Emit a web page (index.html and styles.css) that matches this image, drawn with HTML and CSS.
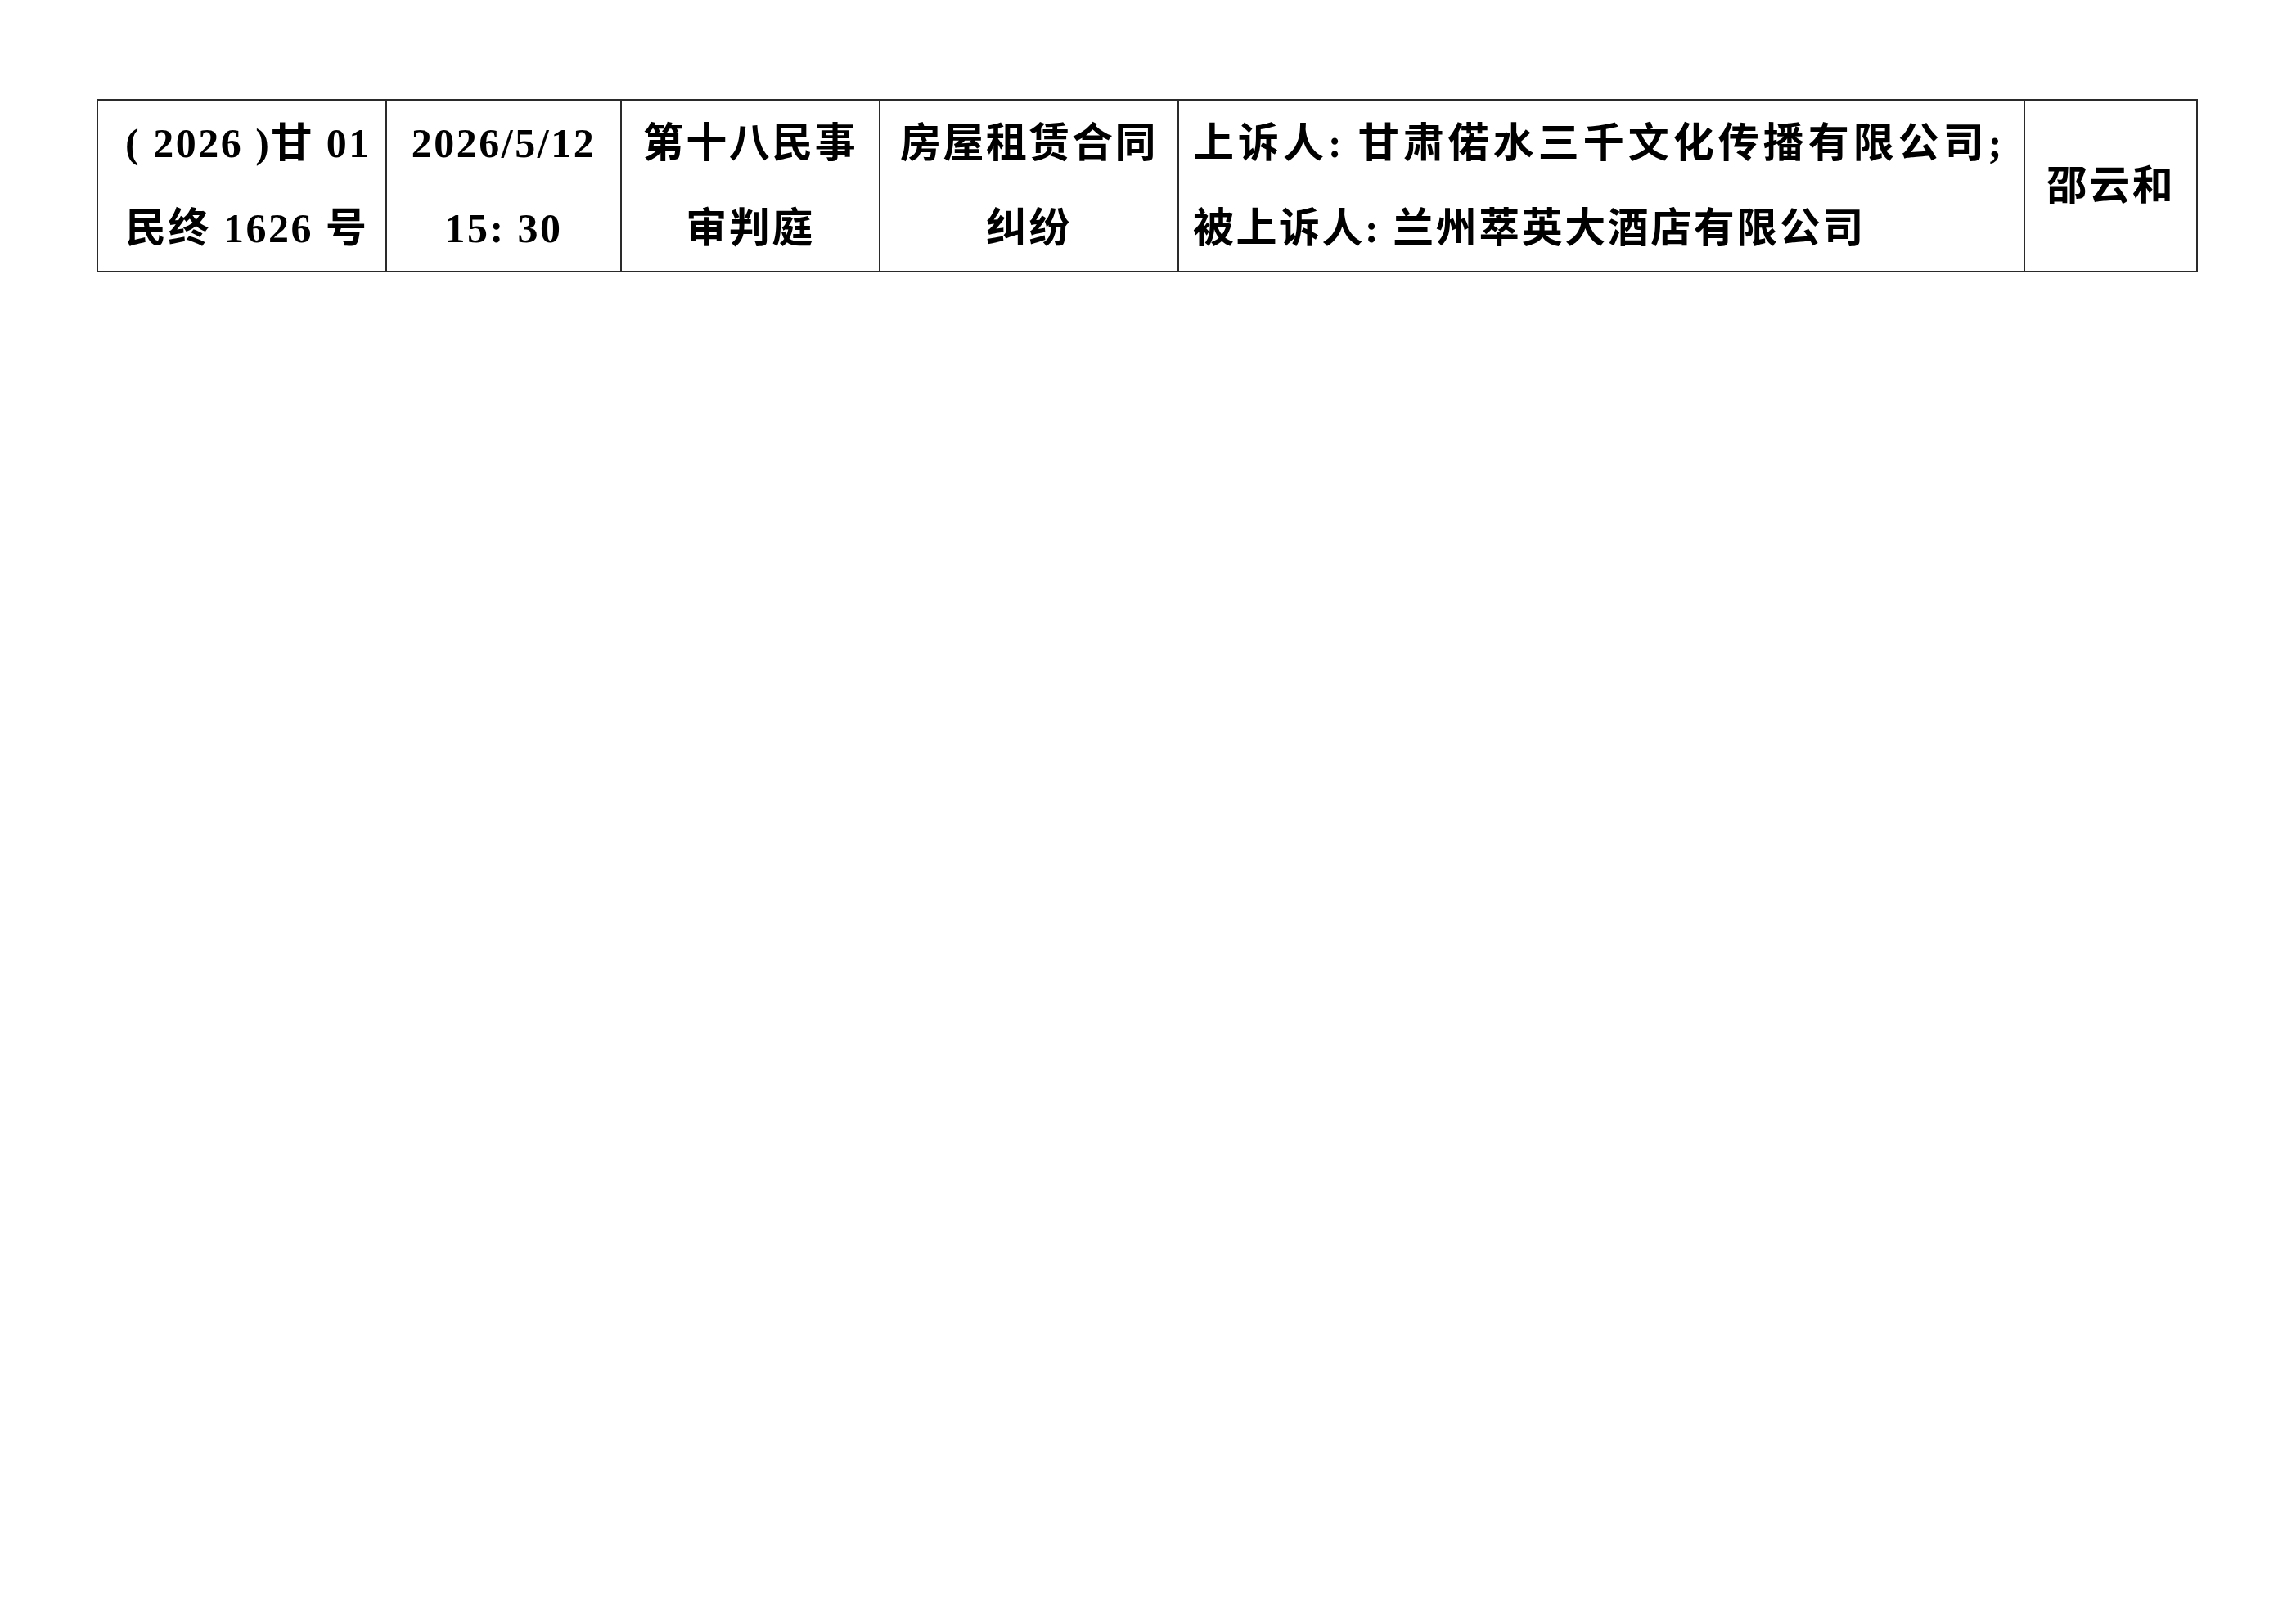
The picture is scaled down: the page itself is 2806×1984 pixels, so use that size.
FILE: index.html
```html
<!DOCTYPE html>
<html lang="zh-CN">
<head>
<meta charset="utf-8">
<title>开庭公告</title>
<link rel="stylesheet" href="styles.css">
</head>
<body>
<div class="page">
  <table class="docket">
    <colgroup>
      <col class="w-case">
      <col class="w-time">
      <col class="w-court">
      <col class="w-cause">
      <col class="w-party">
      <col class="w-judge">
    </colgroup>
    <tr>
      <td class="cell cell-case">
        <div class="line line-just">( 2026 )甘 01</div>
        <div class="line">民终 1626 号</div>
      </td>
      <td class="cell cell-center">
        <div class="line">2026/5/12</div>
        <div class="line">15: 30</div>
      </td>
      <td class="cell cell-center">
        <div class="line">第十八民事</div>
        <div class="line">审判庭</div>
      </td>
      <td class="cell cell-center">
        <div class="line">房屋租赁合同</div>
        <div class="line">纠纷</div>
      </td>
      <td class="cell cell-party">
        <div class="line line-just">上诉人: 甘肃偌水三千文化传播有限公司;</div>
        <div class="line">被上诉人: 兰州萃英大酒店有限公司</div>
      </td>
      <td class="cell cell-center">
        <div class="line">邵云和</div>
      </td>
    </tr>
  </table>
</div>
</body>
</html>
```

FILE: styles.css
```css
html, body {
  margin: 0;
  padding: 0;
  background: #ffffff;
}

body {
  font-family: "Liberation Serif", "Noto Sans CJK SC", serif;
  color: #000000;
}

.page {
  padding: 121px 0 0 118px;
}

.docket {
  border-collapse: collapse;
  table-layout: fixed;
  width: 2566px;
}

.w-case { width: 353px; }
.w-time { width: 287px; }
.w-court { width: 316px; }
.w-cause { width: 365px; }
.w-party { width: 1034px; }
.w-judge { width: 211px; }

.cell {
  border: 2px solid #2a2a2a;
  padding: 0;
  height: 208px;
  vertical-align: middle;
  font-size: 50px;
  font-weight: 700;
  letter-spacing: 2.5px;
  line-height: 104px;
  white-space: nowrap;
}

.line {
  line-height: 104px;
  height: 104px;
}

.line-just {
  text-align: justify;
  text-align-last: justify;
}

.cell-case {
  padding: 0 18px 0 33px;
  text-align: left;
}

.cell-center {
  text-align: center;
}

.cell-party {
  padding: 0 24px 0 17px;
  text-align: left;
}
```
